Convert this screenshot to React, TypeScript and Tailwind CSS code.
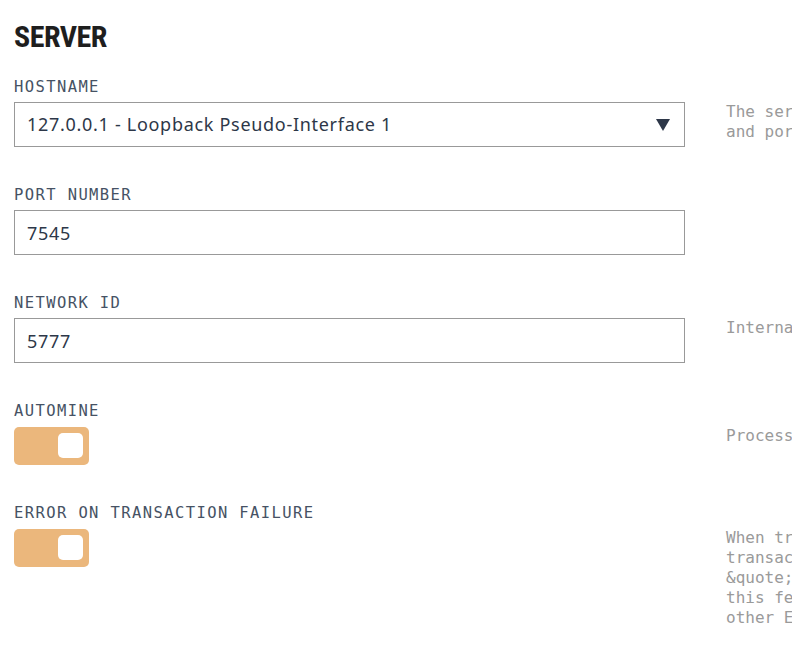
import React, { useState } from 'react';

type Field = {
    label: string;
    kind: 'select' | 'input' | 'toggle';
    value?: string;
    desc: string[];
};

const fields: Field[] = [
    {
        label: 'HOSTNAME', kind: 'select', value: '127.0.0.1 - Loopback Pseudo-Interface 1',
        desc: ['The server will accept RPC connections on the following host', 'and port.'],
    },
    { label: 'PORT NUMBER', kind: 'input', value: '7545', desc: [] },
    { label: 'NETWORK ID', kind: 'input', value: '5777', desc: ['Internal blockchain identifier of Ganache server.'] },
    { label: 'AUTOMINE', kind: 'toggle', desc: ['Process transactions instantly.'] },
    {
        label: 'ERROR ON TRANSACTION FAILURE', kind: 'toggle',
        desc: [
            'When transactions fail, throw an error. If disabled,',
            'transaction failures will only be detectable via the',
            '&quote;status&quote; flag in the transaction receipt. Disabling',
            'this feature will make Ganache handle transaction failures like',
            'other Ethereum clients.',
        ],
    },
];

const Toggle: React.FC = () => {
    const [on, setOn] = useState(true);
    return (
        <button
            onClick={() => setOn(!on)}
            className={`flex h-[38px] w-[75px] items-start rounded-[5px] pt-[6px] px-[6px] ${on ? 'justify-end bg-[#ebb77c]' : 'justify-start bg-[#cbd5e0]'}`}
        >
            <span className="block h-[25px] w-[25px] rounded-[5px] bg-white" />
        </button>
    );
};

const App: React.FC = () => {
    return (
        <div className="h-[649px] w-[792px] overflow-hidden bg-white px-[14px] pt-[19px]">
            <h1 className="text-[30px] font-bold leading-[36px] text-[#1e1e1e] [font-family:'Roboto_Condensed','Liberation_Sans_Narrow',Roboto,sans-serif] tracking-[-0.5px]">
                SERVER
            </h1>

            <div className="mt-[25px] flex flex-col">
                {fields.map(f => (
                    <div key={f.label} className={`flex ${f.kind === 'toggle' ? 'h-[102px]' : 'h-[108px]'}`}>
                        <div className="w-[671px] shrink-0">
                            <label className={`block text-[15.5px] leading-[15px] tracking-[1.4px] text-[#465264] [font-family:'DejaVu_Sans_Mono',monospace] ${f.kind === 'toggle' ? 'h-[23px]' : 'h-[22px]'}`}>
                                {f.label}
                            </label>
                            {f.kind === 'select' && (
                                <div className="flex h-[45px] items-center justify-between border border-[#999999] pl-[12px] pr-[14px] text-[18px] tracking-[0.7px] text-[#2d3748] [font-family:'Noto_Sans',sans-serif]">
                                    <span>{f.value}</span>
                                    <svg width="14" height="12" viewBox="0 0 14 12">
                                        <path d="M0 0 H14 L7 12 Z" fill="#2d3748" />
                                    </svg>
                                </div>
                            )}
                            {f.kind === 'input' && (
                                <input
                                    defaultValue={f.value}
                                    className="block h-[45px] w-full border border-[#999999] px-[12px] text-[18px] tracking-[0.7px] text-[#2d3748] outline-none [font-family:'Noto_Sans',sans-serif]"
                                />
                            )}
                            {f.kind === 'toggle' && <Toggle />}
                        </div>
                        <div className="ml-[41px] shrink-0 whitespace-pre pt-[22px] text-[16px] leading-[20px] text-[#9a9a9a] [font-family:'DejaVu_Sans_Mono',monospace]">
                            {f.desc.join('\n')}
                        </div>
                    </div>
                ))}
            </div>
        </div>
    );
};

export default App;
